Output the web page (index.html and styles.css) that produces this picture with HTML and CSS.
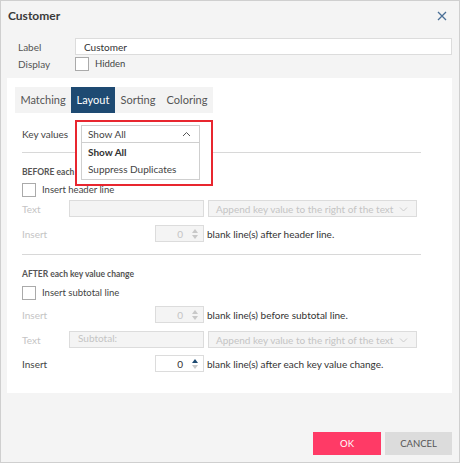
FILE: index.html
```html
<!DOCTYPE html>
<html lang="en">
<head>
  <meta charset="UTF-8" />
  <title>Customer</title>
  <link rel="stylesheet" href="styles.css">
</head>
<body>
  <div class="dialog">
    <div class="title-bar">
      <span class="title">Customer</span>
      <svg class="close" width="10" height="10" viewBox="0 0 10 10"><path d="M1 1L9 9M9 1L1 9" stroke="#4a6f96" stroke-width="1.3" fill="none"/></svg>
    </div>

    <div class="props">
      <div class="prop-row">
        <span class="prop-label">Label</span>
        <input class="text-input wide" type="text" value="Customer" />
      </div>
      <div class="prop-row display-row">
        <span class="prop-label">Display</span>
        <span class="check"></span>
        <span class="check-label">Hidden</span>
      </div>
    </div>

    <div class="panel">
      <div class="tabs">
        <span class="tab tab-matching">Matching</span>
        <span class="tab tab-layout active">Layout</span>
        <span class="tab tab-sorting">Sorting</span>
        <span class="tab tab-coloring">Coloring</span>
      </div>

      <div class="key-row">
        <span class="key-label">Key values</span>
        <div class="combo">
          <div class="combo-box">
            <span>Show All</span>
            <svg width="9" height="6" viewBox="0 0 9 6"><path d="M1 5L4.5 1.5L8 5" stroke="#555" stroke-width="1" fill="none"/></svg>
          </div>
          <ul class="combo-list">
            <li class="selected">Show All</li>
            <li>Suppress Duplicates</li>
          </ul>
        </div>
      </div>

      <hr class="sep" />

      <div class="group-title first">BEFORE each key value change</div>
      <div class="check-row">
        <span class="check"></span>
        <span class="check-label">Insert header line</span>
      </div>
      <div class="field-row row-text-1 disabled">
        <span class="field-label">Text</span>
        <span class="text-input"></span>
        <span class="select-input">Append key value to the right of the text
          <svg width="9" height="6" viewBox="0 0 9 6"><path d="M1 1.5L4.5 5L8 1.5" stroke="#ccc" stroke-width="1" fill="none"/></svg>
        </span>
      </div>
      <div class="field-row row-insert-1 disabled">
        <span class="field-label">Insert</span>
        <span class="num-input"><span class="num-val">0</span><span class="spin"><i class="up"></i><i class="down"></i></span></span>
        <span class="field-text">blank line(s) after header line.</span>
      </div>

      <hr class="sep sep-2" />

      <div class="group-title">AFTER each key value change</div>
      <div class="check-row check-row-2">
        <span class="check"></span>
        <span class="check-label">Insert subtotal line</span>
      </div>
      <div class="field-row row-insert-2 disabled">
        <span class="field-label">Insert</span>
        <span class="num-input"><span class="num-val">0</span><span class="spin"><i class="up"></i><i class="down"></i></span></span>
        <span class="field-text">blank line(s) before subtotal line.</span>
      </div>
      <div class="field-row row-text-2 disabled">
        <span class="field-label">Text</span>
        <span class="text-input placeholder">Subtotal:</span>
        <span class="select-input">Append key value to the right of the text
          <svg width="9" height="6" viewBox="0 0 9 6"><path d="M1 1.5L4.5 5L8 1.5" stroke="#ccc" stroke-width="1" fill="none"/></svg>
        </span>
      </div>
      <div class="field-row row-insert-3">
        <span class="field-label">Insert</span>
        <span class="num-input"><span class="num-val">0</span><span class="spin"><i class="up"></i><i class="down"></i></span></span>
        <span class="field-text">blank line(s) after each key value change.</span>
      </div>
    </div>

    <div class="footer">
      <button class="btn btn-ok">OK</button>
      <button class="btn btn-cancel">CANCEL</button>
    </div>
  </div>
</body>
</html>
```

FILE: styles.css
```css
* { box-sizing: border-box; }
body { margin: 0; font-family: Lato, "Open Sans", sans-serif; font-size: 10px; line-height: 12px; color: #333; }

.dialog { width: 460px; height: 463px; background: #f4f4f4; border: 1px solid #cfcfcf; display: flex; flex-direction: column; }

.title-bar { height: 29px; display: flex; align-items: center; justify-content: space-between; padding: 0 12px 0 7px; }
.title { font-size: 12px; font-weight: bold; color: #3a3a3a; }

.props { padding: 8px 7px 0 17px; }
.prop-row { display: flex; align-items: center; }
.prop-label { width: 57px; color: #555; }
.display-row { margin-top: 2px; height: 14px; }
.text-input { display: block; height: 17px; background: #fff; border: 1px solid #dcdcdc; padding: 0 8px; line-height: 15px; font: inherit; color: #333; }
.text-input.wide { flex: 1; }

.check { display: inline-block; width: 14px; height: 14px; border: 1px solid #aaa; background: #fff; }
.check-label { margin-left: 6px; color: #444; font-size: 9.5px; }

.panel { background: #fff; margin: 7px 7px 0 6px; height: 315px; padding: 9px 31px 0 15px; }

.tabs { display: flex; margin-left: -7px; height: 26px; background: #f3f3f3; width: 198px; }
.tab { display: flex; align-items: center; justify-content: center; font-size: 11px; color: #555; }
.tab-matching { width: 56px; }
.tab-layout { width: 44px; }
.tab-sorting { width: 46px; }
.tab-coloring { width: 52px; }
.tab.active { background: #1e4a72; color: #fff; }

.key-row { display: flex; align-items: center; margin-top: 12px; height: 18px; }
.key-label { width: 59px; color: #444; }
.combo { position: relative; }
.combo::before { content: ""; position: absolute; left: -6px; top: -5px; width: 134px; height: 62px; border: 2px solid #e8262f; background: #fff; }
.combo-box { position: relative; width: 119px; height: 18px; border: 1px solid #cfcfcf; background: #fff; display: flex; align-items: center; justify-content: space-between; padding: 0 8px 0 6px; color: #444; }
.combo-list { position: absolute; left: 0; top: 17px; width: 119px; margin: 0; padding: 1px 0; list-style: none; border: 1px solid #cfcfcf; background: #fff; }
.combo-list li { height: 17px; line-height: 17px; padding-left: 6px; color: #444; }
.combo-list li.selected { font-weight: bold; color: #333; }

.sep { border: 0; border-top: 1px solid #d8d8d8; margin: 9px 0 0 0; }
.sep-2 { margin-top: 12px; }

.group-title { font-size: 8.5px; font-weight: bold; color: #555; height: 12px; line-height: 12px; margin-top: 13px; }

.check-row { display: flex; align-items: center; height: 14px; margin-top: 5px; }
.check-row-2 { margin-top: 6px; }

.field-row { display: grid; grid-template-columns: 43px 135px auto; column-gap: 4px; align-items: center; height: 17px; }
.field-label { color: #444; }
.field-text { color: #333; margin-left: -1px; }
.disabled .field-label { color: #c4c4c4; }
.disabled .text-input { background: #f4f4f4; border-color: #dcdcdc; }
.text-input.placeholder { color: #c4c4c4; }
.select-input { width: 209px; height: 17px; border: 1px solid #dcdcdc; background: #f4f4f4; color: #c4c4c4; display: flex; align-items: center; justify-content: space-between; padding: 0 8px 0 7px; }

.row-text-1 { margin-top: 3px; }
.row-insert-1 { margin-top: 8px; }
.row-insert-2 { margin-top: 6px; }
.row-text-2 { margin-top: 8px; }
.row-insert-3 { margin-top: 7px; }

.num-input { justify-self: end; width: 49px; height: 17px; border: 1px solid #dcdcdc; background: #fff; display: flex; align-items: center; justify-content: flex-end; }
.num-val { margin-right: 9px; color: #333; }
.spin { display: flex; flex-direction: column; gap: 2px; margin-right: 5px; }
.spin i { display: block; width: 0; height: 0; border-left: 3px solid transparent; border-right: 3px solid transparent; }
.spin .up { border-bottom: 4px solid #1e4a72; }
.spin .down { border-top: 4px solid #c8c8c8; }
.disabled .num-input { background: #f4f4f4; }
.disabled .num-val { color: #c4c4c4; }
.disabled .spin .up { border-bottom-color: #c8c8c8; }

.footer { margin-top: auto; display: flex; justify-content: flex-end; gap: 4px; padding: 0 7px 7px 0; }
.btn { width: 68px; height: 23px; border: 0; font-family: inherit; font-size: 9.5px; }
.btn-ok { background: #ff3a66; color: #fff; }
.btn-cancel { width: 67px; background: #dcdcdc; color: #555; }
```
